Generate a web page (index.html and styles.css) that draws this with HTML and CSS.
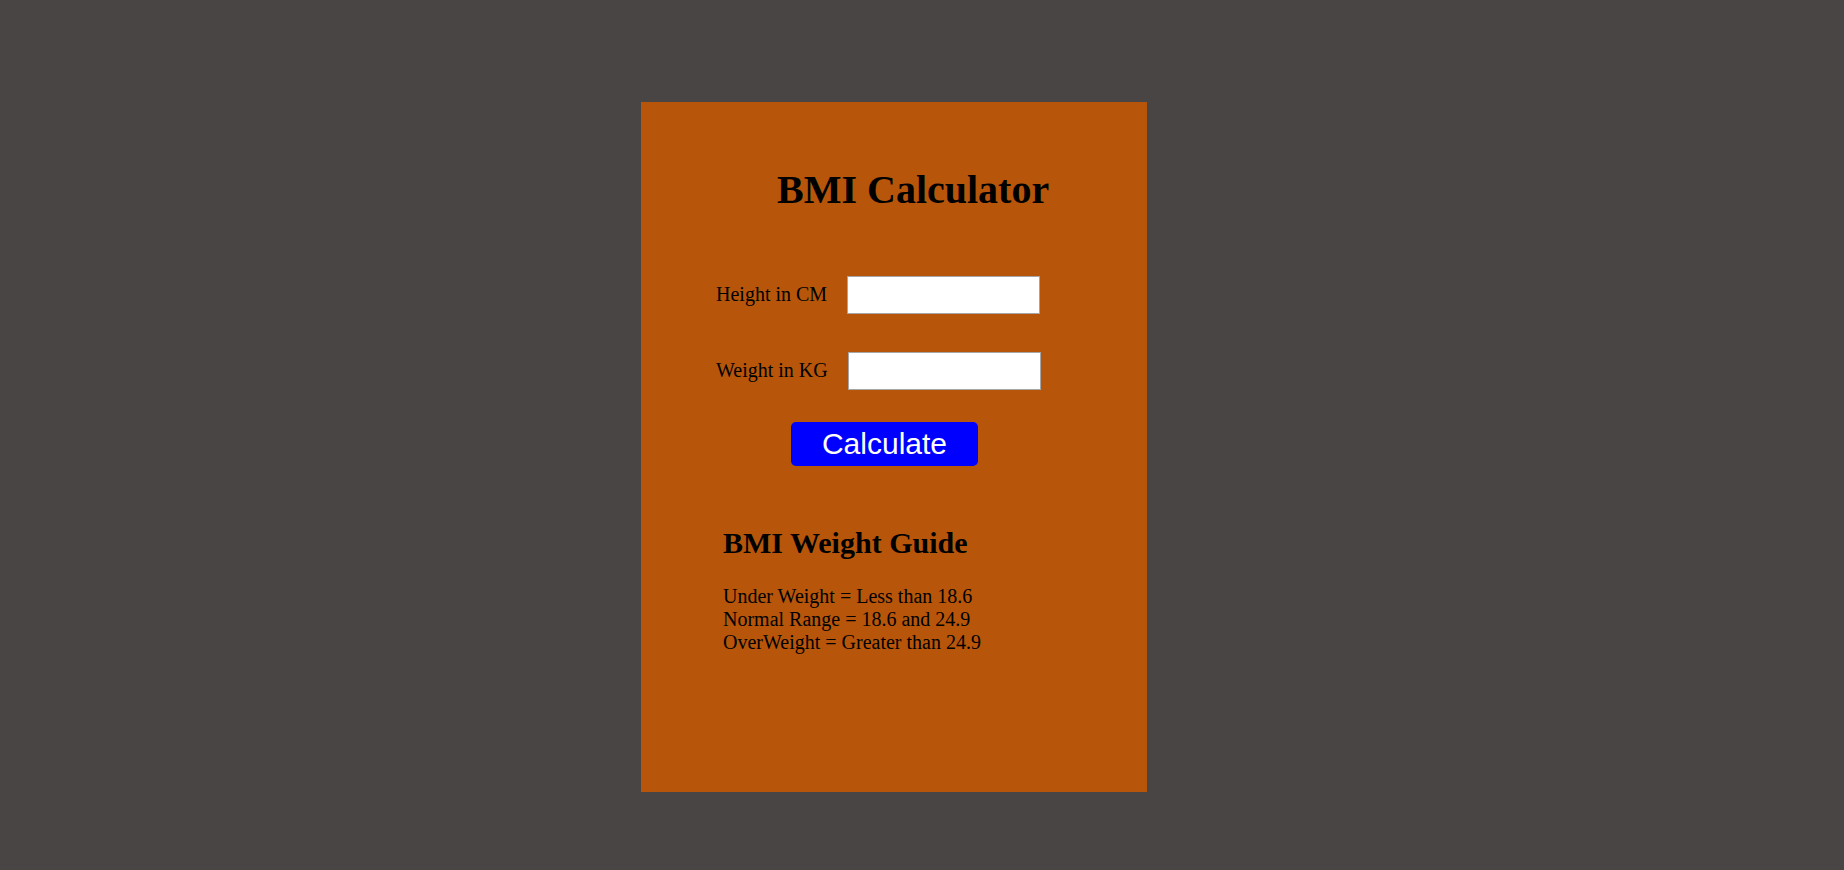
FILE: index.html
```html
<!DOCTYPE html>
<html>
<head>
<meta charset="utf-8">
<title>BMI Calculator</title>
<link rel="stylesheet" href="styles.css">
</head>
<body>
<div class="card">
  <h1 class="title">BMI Calculator</h1>
  <div class="form">
    <div class="row">
      <label class="label label-h">Height in CM</label>
      <input class="field" type="text">
    </div>
    <div class="row">
      <label class="label label-w">Weight in KG</label>
      <input class="field" type="text">
    </div>
    <button class="btn">Calculate</button>
  </div>
  <div class="guide">
    <h2 class="guide-title">BMI Weight Guide</h2>
    <p class="guide-text">Under Weight = Less than 18.6<br>Normal Range = 18.6 and 24.9<br>OverWeight = Greater than 24.9</p>
  </div>
</div>
</body>
</html>
```

FILE: styles.css
```css
html, body {
  margin: 0;
  padding: 0;
}
body {
  background: #4a4545;
  font-family: "Liberation Serif", "Times New Roman", serif;
  font-size: 20px;
  color: #000;
  width: 1844px;
  height: 870px;
  overflow: hidden;
}
.card {
  box-sizing: border-box;
  margin: 102px 0 0 641px;
  width: 506px;
  height: 690px;
  background: #b7560a;
  padding-top: 65px;
}
.title {
  margin: 0 0 0 136px;
  font-size: 40px;
  line-height: 46px;
  font-weight: bold;
}
.form {
  margin-top: 63px;
  padding-left: 75px;
  display: flex;
  flex-direction: column;
  align-items: flex-start;
}
.row {
  display: flex;
  align-items: center;
  margin-bottom: 38px;
}
.row:last-of-type {
  margin-bottom: 0;
}
.label {
  line-height: 23px;
  position: relative;
  top: -1px;
}
.label-h {
  margin-right: 20px;
}
.label-w {
  margin-right: 20px;
}
.field {
  box-sizing: border-box;
  width: 193px;
  height: 38px;
  border: 1px solid #a6a6a6;
  background: #fff;
  padding: 0 4px;
  margin: 0;
  font-size: 20px;
  outline: none;
}
.btn {
  margin: 32px 0 0 75px;
  width: 187px;
  height: 44px;
  padding: 0;
  border: none;
  border-radius: 5px;
  background: #0000ff;
  color: #fff;
  font-family: "Liberation Sans", Arial, sans-serif;
  font-size: 30px;
  line-height: 44px;
}
.guide {
  margin-top: 59px;
  padding-left: 82px;
}
.guide-title {
  margin: 0;
  font-size: 30px;
  line-height: 35px;
  font-weight: bold;
}
.guide-text {
  margin: 25px 0 0 0;
  line-height: 23px;
}
```
